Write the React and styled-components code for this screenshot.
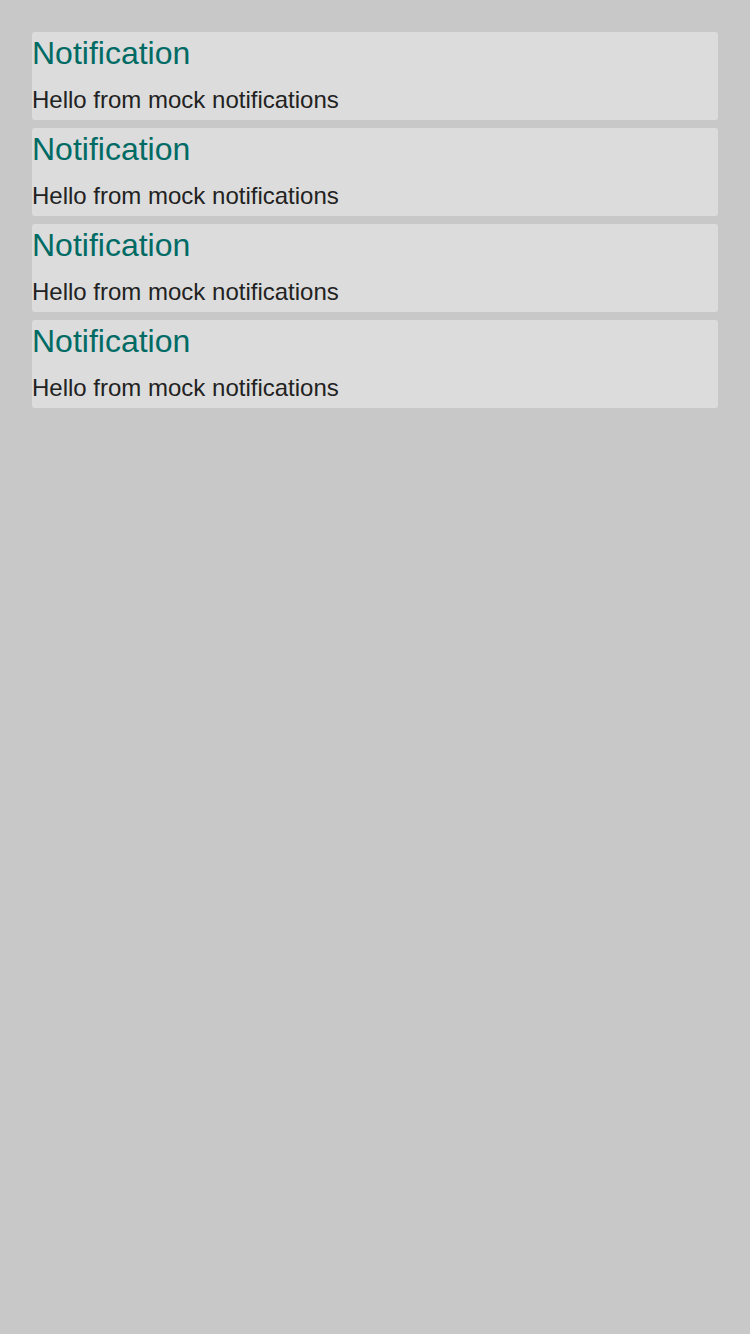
import React from 'react';
import styled, { createGlobalStyle } from 'styled-components';

const GlobalStyle = createGlobalStyle`
  html, body {
    margin: 0;
    padding: 0;
    background-color: #c8c8c8;
    font-family: "Liberation Sans", Arial, sans-serif;
  }
`;

const Page = styled.div`
  min-height: 1334px;
  padding: 32px;
  box-sizing: border-box;
  display: flex;
  flex-direction: column;
  gap: 8px;
`;

const Card = styled.div`
  background-color: #dcdcdc;
  border-radius: 3px;
  height: 88px;
  box-sizing: border-box;
`;

const Title = styled.div`
  font-size: 32px;
  line-height: 42px;
  color: #006b64;
  margin-bottom: 11px;
`;

const Body = styled.div`
  font-size: 24px;
  line-height: 30px;
  color: #222222;
`;

const notifications = [1, 2, 3, 4].map((id) => ({
  id,
  title: 'Notification',
  body: 'Hello from mock notifications',
}));

export default function App() {
  return (
    <>
      <GlobalStyle />
      <Page>
        {notifications.map((n) => (
          <Card key={n.id}>
            <Title>{n.title}</Title>
            <Body>{n.body}</Body>
          </Card>
        ))}
      </Page>
    </>
  );
}
